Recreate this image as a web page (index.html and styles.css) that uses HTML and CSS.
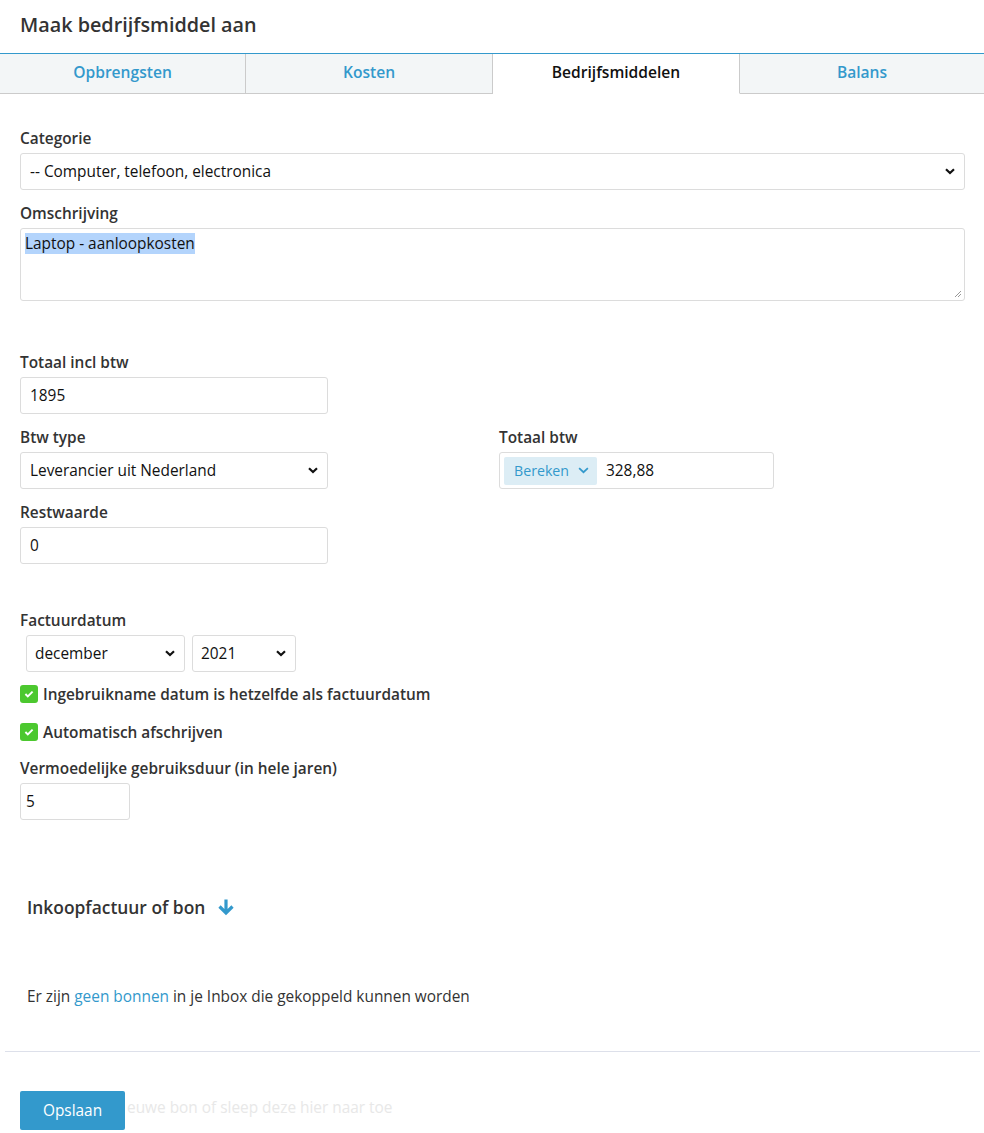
FILE: index.html
```html
<!DOCTYPE html>
<html lang="nl">
<head>
<meta charset="utf-8">
<title>Maak bedrijfsmiddel aan</title>
<link rel="stylesheet" href="styles.css">
</head>
<body>
<div class="modal">
  <header class="modal-header">
    <h1 class="modal-title">Maak bedrijfsmiddel aan</h1>
  </header>

  <nav class="tabs">
    <a class="tab">Opbrengsten</a>
    <a class="tab">Kosten</a>
    <a class="tab tab-active">Bedrijfsmiddelen</a>
    <a class="tab">Balans</a>
  </nav>

  <form class="form">
    <div class="field">
      <label class="label">Categorie</label>
      <div class="select-wrap">
        <select class="control select">
          <option>-- Computer, telefoon, electronica</option>
        </select>
        <svg class="chevron" viewBox="0 0 10 7" width="10" height="7"><path d="M1 1.2 L5 5 L9 1.2" fill="none" stroke="#111" stroke-width="2.2"/></svg>
      </div>
    </div>

    <div class="field">
      <label class="label">Omschrijving</label>
      <div class="textarea"><span class="selected">Laptop - aanloopkosten</span>
        <svg class="grip" viewBox="0 0 8 8" width="8" height="8"><path d="M7 1 L1 7 M7 4 L4 7" stroke="#999" stroke-width="1"/></svg>
      </div>
    </div>

    <div class="field field-gap">
      <label class="label">Totaal incl btw</label>
      <input class="control input-half" value="1895">
    </div>

    <div class="row">
      <div class="field">
        <label class="label">Btw type</label>
        <div class="select-wrap select-half">
          <select class="control select">
            <option>Leverancier uit Nederland</option>
          </select>
          <svg class="chevron" viewBox="0 0 10 7" width="10" height="7"><path d="M1 1.2 L5 5 L9 1.2" fill="none" stroke="#111" stroke-width="2.2"/></svg>
        </div>
      </div>
      <div class="field">
        <label class="label">Totaal btw</label>
        <div class="input-group">
          <span class="addon">Bereken
            <svg viewBox="0 0 12 8" width="11" height="7"><path d="M1 1.3 L6 6 L11 1.3" fill="none" stroke="#3399cc" stroke-width="2"/></svg>
          </span>
          <span class="group-value">328,88</span>
        </div>
      </div>
    </div>

    <div class="field">
      <label class="label">Restwaarde</label>
      <input class="control input-half" value="0">
    </div>

    <div class="field field-gap2">
      <label class="label">Factuurdatum</label>
      <div class="date-row">
        <div class="select-wrap select-month">
          <select class="control select">
            <option>december</option>
          </select>
          <svg class="chevron" viewBox="0 0 10 7" width="10" height="7"><path d="M1 1.2 L5 5 L9 1.2" fill="none" stroke="#111" stroke-width="2.2"/></svg>
        </div>
        <div class="select-wrap select-year">
          <select class="control select">
            <option>2021</option>
          </select>
          <svg class="chevron" viewBox="0 0 10 7" width="10" height="7"><path d="M1 1.2 L5 5 L9 1.2" fill="none" stroke="#111" stroke-width="2.2"/></svg>
        </div>
      </div>
    </div>

    <div class="check">
      <span class="box"><svg viewBox="0 0 12 10" width="10" height="8"><path d="M1.5 5 L4.5 8 L10.5 2" fill="none" stroke="#fff" stroke-width="2.4"/></svg></span>
      <span class="check-label">Ingebruikname datum is hetzelfde als factuurdatum</span>
    </div>
    <div class="check">
      <span class="box"><svg viewBox="0 0 12 10" width="10" height="8"><path d="M1.5 5 L4.5 8 L10.5 2" fill="none" stroke="#fff" stroke-width="2.4"/></svg></span>
      <span class="check-label">Automatisch afschrijven</span>
    </div>

    <div class="field field-after-checks">
      <label class="label">Vermoedelijke gebruiksduur (in hele jaren)</label>
      <input class="control input-small" value="5">
    </div>

    <section class="receipt">
      <h2 class="receipt-title">Inkoopfactuur of bon
        <svg class="arrow" viewBox="0 0 18 18" width="18" height="18"><path d="M9 1.5 V15 M2.5 8.5 L9 15 L15.5 8.5" fill="none" stroke="#3399cc" stroke-width="3.2"/></svg>
      </h2>
      <p class="receipt-text">Er zijn <a class="link">geen bonnen</a> in je Inbox die gekoppeld kunnen worden</p>
    </section>
  </form>

  <hr class="divider">

  <footer class="footer">
    <button class="btn" type="button">Opslaan</button>
    <span class="drop-hint">euwe bon of sleep deze hier naar toe</span>
  </footer>
</div>
</body>
</html>
```

FILE: styles.css
```css
* { box-sizing: border-box; }

body {
  margin: 0;
  background: #fff;
  font-family: "Open Sans", "Liberation Sans", sans-serif;
  color: #333;
}

.modal-header {
  height: 53px;
  padding: 12px 20px 0;
}

.modal-title {
  margin: 0;
  font-size: 19.8px;
  line-height: 26px;
  font-weight: 600;
  color: #333;
}

/* tab strip */
.tabs {
  display: grid;
  grid-template-columns: 246px 247px 247px 1fr;
  border-top: 1px solid #3399cc;
  height: 41px;
}

.tab {
  display: flex;
  align-items: center;
  justify-content: center;
  padding-bottom: 3px;
  background: #f3f6f7;
  border-right: 1px solid #cbcbcb;
  border-bottom: 1px solid #cbcbcb;
  color: #3399cc;
  font-size: 15.6px;
  font-weight: 600;
}

.tab:last-child { border-right: none; }

.tab-active {
  background: #fff;
  color: #111;
  border-bottom-color: #fff;
}

/* form */
.form {
  padding: 34px 19px 0 20px;
}

.field { margin-bottom: 13px; }
.field-gap { margin-top: 51px; }
.field-gap2 { margin-top: 46px; margin-bottom: 10px; }
.field-after-checks { margin-top: 2px; }

.label {
  display: block;
  font-size: 15.4px;
  line-height: 21px;
  font-weight: 600;
  color: #333;
  margin-bottom: 4px;
}

.control {
  display: block;
  width: 100%;
  height: 37px;
  border: 1px solid #dcdcdc;
  border-radius: 3px;
  background: #fff;
  font-family: "Open Sans", "Liberation Sans", sans-serif;
  font-size: 15.4px;
  color: #111;
  padding: 0 9px;
  outline: none;
}

.select-wrap { position: relative; }

.select {
  appearance: none;
  -webkit-appearance: none;
}

.chevron {
  position: absolute;
  right: 10px;
  top: 15px;
  pointer-events: none;
}

.textarea {
  position: relative;
  height: 73px;
  border: 1px solid #dcdcdc;
  border-radius: 3px;
  padding: 4px 4px 3px;
  font-size: 15.4px;
  line-height: 22px;
  color: #111;
}

.selected { background: #b3d4fc; }

.grip {
  position: absolute;
  right: 2px;
  bottom: 2px;
}

.input-half { width: 308px; }
.select-half { width: 308px; }
.input-small { width: 110px; padding: 0 5px; }

.row {
  display: grid;
  grid-template-columns: 479px 1fr;
}

.input-group {
  display: flex;
  align-items: center;
  width: 275px;
  height: 37px;
  border: 1px solid #dcdcdc;
  border-radius: 3px;
  padding: 0 4px;
}

.addon {
  display: flex;
  align-items: center;
  gap: 9px;
  height: 28px;
  width: 93px;
  padding-left: 10px;
  background: #dcedf5;
  border-radius: 2px;
  color: #3399cc;
  font-size: 14.2px;
}

.group-value {
  margin-left: 9px;
  font-size: 15.4px;
  color: #111;
}

.date-row {
  display: flex;
  gap: 7px;
  padding-left: 6px;
}

.select-month { width: 159px; }
.select-year { width: 104px; }
.select-month .select, .select-year .select { height: 37px; padding-left: 8px; }

.check {
  display: flex;
  align-items: center;
  gap: 5px;
  height: 24px;
  margin-bottom: 14px;
}

.box {
  display: flex;
  align-items: center;
  justify-content: center;
  width: 18px;
  height: 18px;
  border-radius: 3px;
  background: #4cc82f;
}

.check-label {
  font-size: 15.4px;
  font-weight: 600;
  color: #333;
}

.receipt { padding: 62px 7px 0; }

.receipt-title {
  display: flex;
  align-items: center;
  gap: 12px;
  margin: 0;
  font-size: 17.4px;
  line-height: 24px;
  font-weight: 600;
  color: #333;
}

.receipt-text {
  margin: 68px 0 0;
  font-size: 15.4px;
  line-height: 20px;
  color: #333;
}

.link { color: #3399cc; }

.divider {
  margin: 44px 4px 0 5px;
  border: none;
  border-top: 1px solid #dde0ea;
}

.footer {
  display: flex;
  align-items: center;
  padding: 39px 20px 0;
}

.btn {
  width: 105px;
  height: 39px;
  border: none;
  border-radius: 2px;
  background: #3399cc;
  color: #fff;
  font-family: "Open Sans", "Liberation Sans", sans-serif;
  font-size: 15.4px;
}

.drop-hint {
  margin-left: 2px;
  font-size: 15.4px;
  color: #e8e8e8;
  margin-top: -7px;
}
```
